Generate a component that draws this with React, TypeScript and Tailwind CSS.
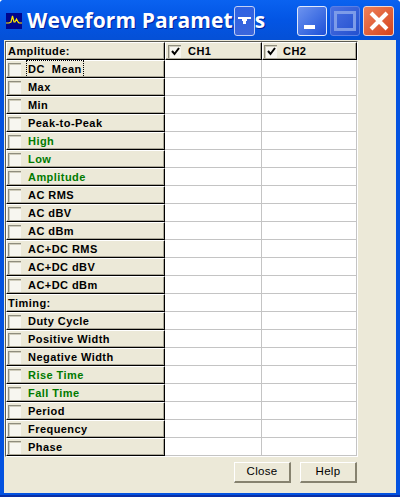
const amplitude = [
  { name: "DC  Mean", focus: true },
  { name: "Max" },
  { name: "Min" },
  { name: "Peak-to-Peak" },
  { name: "High", green: true },
  { name: "Low", green: true },
  { name: "Amplitude", green: true },
  { name: "AC RMS" },
  { name: "AC dBV" },
  { name: "AC dBm" },
  { name: "AC+DC RMS" },
  { name: "AC+DC dBV" },
  { name: "AC+DC dBm" },
];

const timing = [
  { name: "Duty Cycle" },
  { name: "Positive Width" },
  { name: "Negative Width" },
  { name: "Rise Time", green: true },
  { name: "Fall Time", green: true },
  { name: "Period" },
  { name: "Frequency" },
  { name: "Phase" },
];

type Row = { name: string; green?: boolean; focus?: boolean };

const Check = ({ checked }: { checked?: boolean }) => (
  <span className="flex h-[13px] w-[13px] shrink-0 items-center justify-center border-t border-l border-t-[#8f8d7e] border-l-[#8f8d7e] bg-[#f7f6f0] shadow-[inset_1px_1px_0_#d0cdbd]">
    {checked && (
      <svg width="9" height="9" viewBox="0 0 9 9">
        <path d="M1 4 L3.5 7 L8 1" fill="none" stroke="#000" strokeWidth="2" />
      </svg>
    )}
  </span>
);

const cellClass =
  "flex h-[18px] items-center border-r border-b border-r-black border-b-black border-t border-l border-t-white border-l-white bg-[#ece9d8] shadow-[inset_-1px_-1px_0_#aca899]";

const EmptyCells = () => (
  <>
    <div className="h-[18px] w-[97px] border-r border-b border-r-[#c4c4c4] border-b-[#c4c4c4] bg-white" />
    <div className="h-[18px] w-[95px] border-r border-b border-r-[#c4c4c4] border-b-[#c4c4c4] bg-white" />
  </>
);

const ParamRow = ({ row }: { row: Row }) => (
  <div className="flex h-[18px]">
    <div className={`${cellClass} w-[159px] pl-[1px]`}>
      <Check />
      <span
        className={`ml-[6px] whitespace-pre px-[1px] ${row.green ? "text-[#007a00]" : "text-black"} ${row.focus ? "outline-1 outline-dotted outline-black" : ""}`}
      >
        {row.name}
      </span>
    </div>
    <EmptyCells />
  </div>
);

const SectionRow = ({ name }: { name: string }) => (
  <div className="flex h-[18px]">
    <div className={`${cellClass} w-[159px] pl-[1px]`}>
      <span className="text-black">{name}</span>
    </div>
    <EmptyCells />
  </div>
);

const Button = ({ label }: { label: string }) => (
  <button className="h-[21px] w-[57px] border-t border-l border-t-white border-l-white border-r-2 border-b-2 border-r-[#86826f] border-b-[#86826f] bg-[#ece9d8] text-[11.5px] font-normal tracking-[0.3px] text-black">
    {label}
  </button>
);

export default function App() {
  return (
    <div className="relative flex h-[497px] w-[400px] flex-col overflow-hidden rounded-t-[4px] border-b-2 border-b-[#0a2fa6] bg-[#0352e0] font-['Liberation_Sans',sans-serif] text-[11px] font-bold tracking-[0.45px]">
      <div className="flex h-[40px] shrink-0 items-center bg-gradient-to-b from-[#0a62f0] via-[#0355e4] to-[#0450d6] pl-[6px] pr-[6px] pt-[2px]">
        <span className="flex h-[16px] w-[16px] items-center justify-center bg-[#00058c]">
          <svg width="16" height="16" viewBox="0 0 16 16">
            <path d="M0 10 H3 L5 9 L6.5 3 L8 9 H9 L10.5 6 L12 9 L13 10 H16" fill="none" stroke="#ffe800" strokeWidth="1.2" />
          </svg>
        </span>
        <span className="ml-[5px] whitespace-nowrap font-['Open_Sans',sans-serif] text-[21px] font-bold tracking-[0.1px] text-white [text-shadow:1px_1px_0_#00209c]">
          Weveform Parameters
        </span>
        <div className="ml-auto flex gap-[3px]">
          <span className="flex h-[30px] w-[30px] items-end rounded-[3px] border border-[#dfe8fb] bg-gradient-to-br from-[#6d93ef] to-[#1c4fd8] pb-[6px] pl-[6px]">
            <span className="h-[4px] w-[11px] bg-white" />
          </span>
          <span className="flex h-[30px] w-[30px] items-center justify-center rounded-[3px] border border-[#5b80e4] bg-gradient-to-br from-[#4a70e2] to-[#2350cf]">
            <span className="h-[20px] w-[22px] border-[3px] border-[#7d9be8]" />
          </span>
          <span className="flex h-[30px] w-[31px] items-center justify-center rounded-[3px] border border-[#f2d6cc] bg-gradient-to-br from-[#ee8059] to-[#d4421a]">
            <svg width="22" height="22" viewBox="0 0 22 22">
              <path d="M3 3 L19 19 M19 3 L3 19" stroke="#fff" strokeWidth="4" />
            </svg>
          </span>
        </div>
      </div>

      <span className="absolute left-[234px] top-[6px] flex h-[30px] w-[21px] justify-center rounded-[3px] border border-[#c3d0f5] bg-gradient-to-b from-[#2f62e2] to-[#3a66dc] pt-[10px]">
        <svg width="13" height="8" viewBox="0 0 13 8">
          <path d="M0 0 H13 V2 H9 V4 H8 V7 H5 V4 H4 V2 H0 Z" fill="#fff" />
        </svg>
      </span>

      <div className="mx-[4px] mb-[2px] flex flex-1 flex-col bg-[#ece9d8] pl-[1px] pt-[1px]">
        <div className="w-[353px] border-t border-l border-t-[#5c5c52] border-l-[#5c5c52] border-r border-b border-r-white border-b-white">
          <div className="flex h-[18px]">
            <div className={`${cellClass} w-[159px] pl-[1px]`}>
              <span className="text-black">Amplitude:</span>
            </div>
            <div className={`${cellClass} w-[97px] pl-[2px]`}>
              <Check checked />
              <span className="ml-[7px]">CH1</span>
            </div>
            <div className={`${cellClass} w-[95px] pl-[1px]`}>
              <Check checked />
              <span className="ml-[6px]">CH2</span>
            </div>
          </div>
          {amplitude.map((row) => (
            <ParamRow key={row.name} row={row} />
          ))}
          <SectionRow name="Timing:" />
          {timing.map((row) => (
            <ParamRow key={row.name} row={row} />
          ))}
        </div>
        <div className="mt-[5px] flex justify-start gap-[9px] pl-[229px]">
          <Button label="Close" />
          <Button label="Help" />
        </div>
      </div>
    </div>
  );
}
